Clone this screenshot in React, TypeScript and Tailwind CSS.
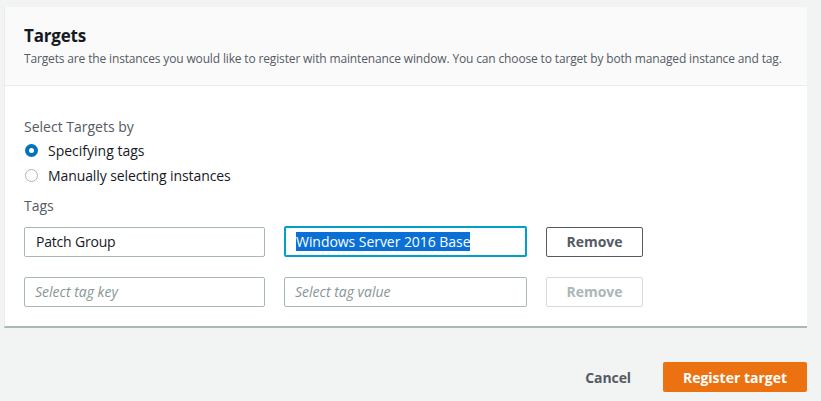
import React from "react";

export default function App() {
  return (
    <div
      className="w-[821px] h-[401px] bg-[#f2f3f3] pt-[7px] pl-[4px] overflow-hidden"
      style={{ fontFamily: '"Open Sans", "Noto Sans", sans-serif' }}
    >
      <div className="w-[803px] bg-white border-l border-[#eaeded] border-b-2 border-b-[#aab7b8]">
        <div className="bg-[#fafafa] border-b border-[#eaeded] h-[79px] pl-[19px] pt-[18px]">
          <div className="text-[17px] leading-[22px] font-bold text-[#16191f] tracking-[-0.2px]">Targets</div>
          <div className="text-[12px] leading-[18px] text-[#545b64] mt-[3px] tracking-[-0.15px]">
            Targets are the instances you would like to register with maintenance window. You can choose to target by both managed instance and tag.
          </div>
        </div>
        <div className="pl-[19px] pt-[31px] pb-[19px]">
          <div className="text-[14px] leading-[20px] text-[#545b64]">Select Targets by</div>
          <div className="flex items-center h-[25px] mt-[1px]">
            <span className="w-[13px] h-[13px] rounded-full bg-[#0073bb] flex items-center justify-center ml-[1px]">
              <span className="w-[5px] h-[5px] rounded-full bg-white" />
            </span>
            <span className="ml-[10px] text-[14px] text-[#16191f]">Specifying tags</span>
          </div>
          <div className="flex items-center h-[25px]">
            <span className="w-[13px] h-[13px] rounded-full border border-[#aab7b8] bg-white ml-[1px]" />
            <span className="ml-[10px] text-[14px] text-[#16191f] tracking-[-0.1px]">Manually selecting instances</span>
          </div>
          <div className="text-[14px] leading-[20px] text-[#545b64] mt-[8px]">Tags</div>
          <div className="flex items-center mt-[10px] h-[31px]">
            <div className="w-[241px] h-[30px] border border-[#aab7b8] rounded-[2px] px-[11px] flex items-center text-[14px] text-[#16191f] tracking-[-0.2px]">
              Patch Group
            </div>
            <div className="ml-[19px] w-[243px] h-[31px] border-2 border-[#00a1c9] rounded-[2px] pl-[10px] flex items-center text-[14px]">
              <span className="bg-[#0a6fd6] text-white leading-[19px] tracking-[-0.05px]">Windows Server 2016 Base</span>
            </div>
            <div className="ml-[19px] w-[97px] h-[30px] border border-[#545b64] rounded-[2px] flex items-center justify-center text-[14px] font-bold text-[#545b64]">
              Remove
            </div>
          </div>
          <div className="flex items-center mt-[19px] h-[31px]">
            <div className="w-[241px] h-[30px] border border-[#aab7b8] rounded-[2px] px-[10px] flex items-center text-[14px] italic text-[#879596]">
              Select tag key
            </div>
            <div className="ml-[19px] w-[243px] h-[30px] border border-[#aab7b8] rounded-[2px] px-[10px] flex items-center text-[14px] italic text-[#879596]">
              Select tag value
            </div>
            <div className="ml-[19px] w-[97px] h-[30px] border border-[#d5dbdb] rounded-[2px] flex items-center justify-center text-[14px] font-bold text-[#aab7b8]">
              Remove
            </div>
          </div>
        </div>
      </div>
      <div className="w-[803px] flex justify-end items-center mt-[34px]">
        <span className="text-[14px] font-bold text-[#545b64] mr-[32px] tracking-[-0.1px]">Cancel</span>
        <div className="w-[144px] h-[30px] bg-[#ec7211] rounded-[2px] flex items-center justify-center text-[14px] font-bold text-white">
          Register target
        </div>
      </div>
    </div>
  );
}
